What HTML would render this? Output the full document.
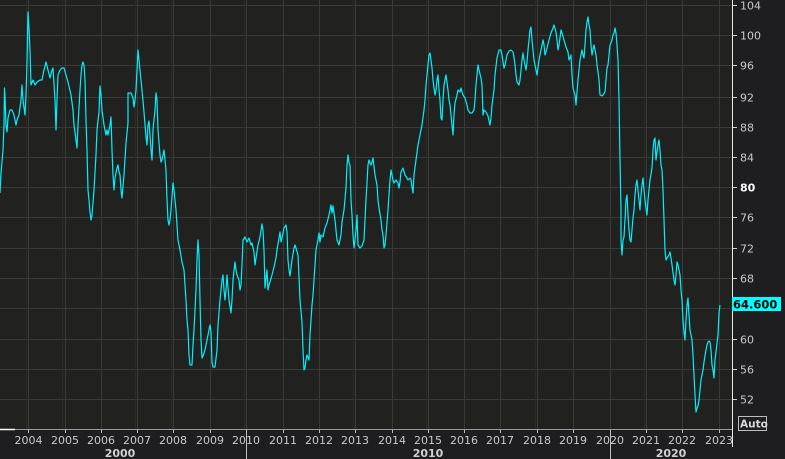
<!DOCTYPE html>
<html><head><style>
html,body{margin:0;padding:0;background:#1e1e20;width:785px;height:459px;overflow:hidden}
svg{display:block}
text{font-family:"DejaVu Sans","Liberation Sans",sans-serif}
</style></head><body>
<svg width="785" height="459" viewBox="0 0 785 459">
<rect x="0" y="0" width="785" height="459" fill="#1e1e20"/>
<rect x="0" y="0" width="732" height="429" fill="#21221f"/>
<g stroke="#3a3b37" stroke-width="1">
<line x1="0" y1="5.5" x2="732" y2="5.5"/><line x1="0" y1="35.5" x2="732" y2="35.5"/><line x1="0" y1="65.5" x2="732" y2="65.5"/><line x1="0" y1="97.5" x2="732" y2="97.5"/><line x1="0" y1="127.5" x2="732" y2="127.5"/><line x1="0" y1="157.5" x2="732" y2="157.5"/><line x1="0" y1="187.5" x2="732" y2="187.5"/><line x1="0" y1="217.5" x2="732" y2="217.5"/><line x1="0" y1="248.5" x2="732" y2="248.5"/><line x1="0" y1="278.5" x2="732" y2="278.5"/><line x1="0" y1="308.5" x2="732" y2="308.5"/><line x1="0" y1="339.5" x2="732" y2="339.5"/><line x1="0" y1="369.5" x2="732" y2="369.5"/><line x1="0" y1="399.5" x2="732" y2="399.5"/>
<line x1="28.5" y1="0" x2="28.5" y2="429"/><line x1="65.5" y1="0" x2="65.5" y2="429"/><line x1="101.5" y1="0" x2="101.5" y2="429"/><line x1="137.5" y1="0" x2="137.5" y2="429"/><line x1="173.5" y1="0" x2="173.5" y2="429"/><line x1="210.5" y1="0" x2="210.5" y2="429"/><line x1="246.5" y1="0" x2="246.5" y2="429"/><line x1="283.5" y1="0" x2="283.5" y2="429"/><line x1="319.5" y1="0" x2="319.5" y2="429"/><line x1="355.5" y1="0" x2="355.5" y2="429"/><line x1="392.5" y1="0" x2="392.5" y2="429"/><line x1="428.5" y1="0" x2="428.5" y2="429"/><line x1="464.5" y1="0" x2="464.5" y2="429"/><line x1="500.5" y1="0" x2="500.5" y2="429"/><line x1="537.5" y1="0" x2="537.5" y2="429"/><line x1="573.5" y1="0" x2="573.5" y2="429"/><line x1="610.5" y1="0" x2="610.5" y2="429"/><line x1="646.5" y1="0" x2="646.5" y2="429"/><line x1="682.5" y1="0" x2="682.5" y2="429"/><line x1="719.5" y1="0" x2="719.5" y2="429"/>
</g>
<g stroke="#2b2c29" stroke-width="1">
<line x1="26.5" y1="0" x2="26.5" y2="429"/><line x1="62.5" y1="0" x2="62.5" y2="429"/><line x1="135.5" y1="0" x2="135.5" y2="429"/><line x1="171.5" y1="0" x2="171.5" y2="429"/><line x1="244.5" y1="0" x2="244.5" y2="429"/><line x1="353.5" y1="0" x2="353.5" y2="429"/><line x1="426.5" y1="0" x2="426.5" y2="429"/><line x1="535.5" y1="0" x2="535.5" y2="429"/><line x1="644.5" y1="0" x2="644.5" y2="429"/>
</g>
<polyline fill="none" stroke="#00f0ff" stroke-width="1.2" stroke-linejoin="round" points="0,193 1,173 3,150 4,125 4.5,88 5,96 6,125 7,132 8,118 10,110 12,110 14,115 16,125 17,120 19,115 21,100 22,85 23,100 25,115 26,95 27,62 28,12 29,28 30,50 31,85 33,80 35,85 37,82 40,80 42,80 44,70 46,62 48,70 50,78 52,70 53,68 55,100 56,130 57,100 58,75 60,70 62,68 64,68 66,75 68,82 71,95 73,110 74,125 76,140 77,148 78,125 80,90 81,75 82,65 83,62 84,65 85,80 86,120 87,150 88,190 89,200 90,212 91,220 92,215 94,190 96,155 97,130 99,112 100,86 101,95 102,110 104,125 106,135 107,130 108,135 110,125 111,117 112,150 113,175 114,190 115,178 117,168 118,165 119,172 120,175 121,190 122,198 124,175 126,143 128,123 128,93 131,93 133,98 134,107 135,100 136,90 137,70 138,50 139,60 140,70 141,80 142,90 144,112 146,137 147,145 148,125 149,121 150,135 151,150 152,160 153,130 155,110 156,93 157,100 158,130 160,155 161,162 162,160 163,155 164,150 166,170 167,200 168,220 169,225 170,220 171,210 173,183 174,190 176,210 178,240 180,250 182,262 184,270 186,300 187,320 188,330 189,355 190,365 192,365 193,345 194,330 195,310 196,290 197,260 198,240 199,255 200,300 201,340 202,358 203,356 205,350 207,340 209,330 210,325 211,332 212,362 213,367 215,367 217,350 218,325 220,300 222,280 223,275 224,290 225,300 226,290 227,275 229,300 231,313 232,300 233,280 235,262 236,270 237,275 239,280 240,290 241,285 242,265 243,240 245,237 247,242 249,238 251,245 252,243 254,252 255,265 256,258 258,245 260,237 262,224 263,230 264,250 265,288 266,278 267,270 268,290 269,285 270,282 272,275 274,267 276,258 277,250 279,238 280,232 281,242 282,238 284,228 286,225 287,232 288,260 289,270 290,276 292,260 294,248 295,245 296,248 298,255 300,300 302,322 303,350 304,370 305,368 306,360 307,355 309,360 310,335 312,305 313,295 314,280 316,250 318,240 319,233 320,242 321,235 323,237 325,228 327,223 329,215 331,205 332,213 333,206 335,220 337,240 339,245 341,235 342,222 344,210 346,188 347,165 348,155 349,163 350,165 351,200 352,215 353,235 354,248 355,240 356,230 357,215 358,245 360,248 362,246 364,240 366,200 368,165 369,160 370,163 371,165 372,162 373,158 375,175 377,185 378,200 379,208 381,220 382,230 383,235 384,248 385,245 386,235 388,210 390,180 391,170 392,175 393,180 394,183 396,180 398,183 399,188 400,182 401,172 403,168 405,175 407,178 408,180 410,178 411,180 412,187 413,193 414,175 416,160 418,145 420,135 422,125 424,110 425,100 426,85 427,75 428,65 429,55 430,53 431,60 432,68 433,80 434,88 435,95 436,90 437,80 438,75 439,90 440,100 441,118 442,120 443,100 444,85 446,75 448,90 449,100 450,105 451,115 452,125 453,135 454,115 455,103 457,95 458,90 460,92 461,88 463,95 465,98 467,105 468,110 470,113 472,113 474,110 475,100 476,85 477,75 478,65 479,70 481,78 482,85 483,115 484,110 486,112 488,116 490,125 491,118 492,105 494,90 495,75 497,58 499,50 501,50 502,55 503,62 504,68 505,65 507,55 509,51 511,50 513,52 514,57 515,65 516,75 517,82 519,85 520,80 521,70 522,60 523,53 524,60 525,65 526,70 527,62 528,50 529,40 530,30 531,27 532,40 534,60 536,70 537,75 539,60 541,50 542,45 543,40 544,45 545,55 546,52 547,48 549,40 551,33 553,28 554,25 556,32 557,40 558,50 559,45 560,38 561,30 562,33 564,40 566,47 568,52 569,60 570,58 571,55 572,75 573,88 575,95 576,105 577,92 578,80 579,70 580,60 581,55 582,50 583,55 584,58 585,45 586,30 587,22 588,17 589,25 590,30 591,45 592,55 593,50 594,45 595,50 596,55 597,65 598,72 599,80 600,95 602,96 603,95 605,92 606,80 607,68 608,65 609,55 610,45 611,43 612,40 613,35 614,33 615,28 616,33 617,45 618,60 619,100 620,160 621,210 621,240 622,255 623,240 624,237 625,220 626,200 627,195 628,215 629,230 630,240 631,242 632,230 633,218 634,210 635,195 636,185 637,180 638,190 639,200 640,210 641,195 642,185 643,178 644,190 645,200 646,208 647,215 648,200 650,180 652,168 653,150 654,140 655,138 656,160 657,152 658,145 659,140 660,150 661,165 662,170 663,190 664,220 665,250 666,260 667,258 669,255 670,252 671,258 672,265 674,280 675,285 676,275 677,262 678,265 679,270 680,275 681,290 682,300 683,320 684,332 685,340 686,320 687,305 688,298 689,315 690,330 692,340 693,355 694,375 695,395 696,412 697,408 698,406 699,400 700,390 701,380 703,370 704,362 706,350 707,345 708,342 709,341 710,342 711,350 712,365 713,370 714,378 715,360 716,352 718,335 719,313 720,305"/>
<line x1="732.5" y1="0" x2="732.5" y2="447" stroke="#e8e8e8" stroke-width="1"/>
<line x1="0" y1="429.5" x2="732" y2="429.5" stroke="#9a9a9a" stroke-width="1"/>
<line x1="0" y1="429.5" x2="15" y2="429.5" stroke="#ffffff" stroke-width="1.5"/>
<g stroke="#d0d0d0"><line x1="733" y1="5.5" x2="737" y2="5.5"/><line x1="733" y1="35.5" x2="737" y2="35.5"/><line x1="733" y1="65.5" x2="737" y2="65.5"/><line x1="733" y1="97.5" x2="737" y2="97.5"/><line x1="733" y1="127.5" x2="737" y2="127.5"/><line x1="733" y1="157.5" x2="737" y2="157.5"/><line x1="733" y1="187.5" x2="737" y2="187.5"/><line x1="733" y1="217.5" x2="737" y2="217.5"/><line x1="733" y1="248.5" x2="737" y2="248.5"/><line x1="733" y1="278.5" x2="737" y2="278.5"/><line x1="733" y1="339.5" x2="737" y2="339.5"/><line x1="733" y1="369.5" x2="737" y2="369.5"/><line x1="733" y1="399.5" x2="737" y2="399.5"/></g>
<g fill="#c8c8c8" font-size="11">
<text x="740" y="9.5">104</text><text x="740" y="39.5">100</text><text x="740" y="69.5">96</text><text x="740" y="101.5">92</text><text x="740" y="131.5">88</text><text x="740" y="161.5">84</text><text x="740" y="191.5" fill="#ffffff" font-weight="bold">80</text><text x="740" y="221.5">76</text><text x="740" y="252.5">72</text><text x="740" y="282.5">68</text><text x="740" y="343.5">60</text><text x="740" y="373.5">56</text><text x="740" y="403.5">52</text>
</g>
<rect x="732" y="297" width="49" height="14" fill="#00ffff"/>
<text x="733" y="308.5" font-size="11.5" font-weight="bold" fill="#000">64.600</text>
<rect x="738.5" y="416.5" width="28" height="14" fill="none" stroke="#bdbdbd"/>
<text x="740" y="427.5" font-size="10.5" font-weight="bold" fill="#d8d8d8">Auto</text>
<g stroke="#bdbdbd"><line x1="28.5" y1="430" x2="28.5" y2="433"/><line x1="65.5" y1="430" x2="65.5" y2="433"/><line x1="101.5" y1="430" x2="101.5" y2="433"/><line x1="137.5" y1="430" x2="137.5" y2="433"/><line x1="173.5" y1="430" x2="173.5" y2="433"/><line x1="210.5" y1="430" x2="210.5" y2="433"/><line x1="246.5" y1="430" x2="246.5" y2="459"/><line x1="283.5" y1="430" x2="283.5" y2="433"/><line x1="319.5" y1="430" x2="319.5" y2="433"/><line x1="355.5" y1="430" x2="355.5" y2="433"/><line x1="392.5" y1="430" x2="392.5" y2="433"/><line x1="428.5" y1="430" x2="428.5" y2="433"/><line x1="464.5" y1="430" x2="464.5" y2="433"/><line x1="500.5" y1="430" x2="500.5" y2="433"/><line x1="537.5" y1="430" x2="537.5" y2="433"/><line x1="573.5" y1="430" x2="573.5" y2="433"/><line x1="610.5" y1="430" x2="610.5" y2="459"/><line x1="646.5" y1="430" x2="646.5" y2="433"/><line x1="682.5" y1="430" x2="682.5" y2="433"/><line x1="719.5" y1="430" x2="719.5" y2="433"/></g>
<g fill="#c8c8c8" font-size="11" text-anchor="middle">
<text x="28.5" y="444">2004</text><text x="65" y="444">2005</text><text x="101" y="444">2006</text><text x="137" y="444">2007</text><text x="173" y="444">2008</text><text x="210" y="444">2009</text><text x="246" y="444">2010</text><text x="283" y="444">2011</text><text x="319" y="444">2012</text><text x="355" y="444">2013</text><text x="392" y="444">2014</text><text x="428" y="444">2015</text><text x="464" y="444">2016</text><text x="500" y="444">2017</text><text x="537" y="444">2018</text><text x="573" y="444">2019</text><text x="610" y="444">2020</text><text x="646" y="444">2021</text><text x="682" y="444">2022</text><text x="719" y="444">2023</text>
</g>
<g fill="#d0d0d0" font-size="11" font-weight="bold" text-anchor="middle">
<text x="120" y="457">2000</text><text x="428" y="457">2010</text><text x="671" y="457">2020</text>
</g>
</svg>
</body></html>
